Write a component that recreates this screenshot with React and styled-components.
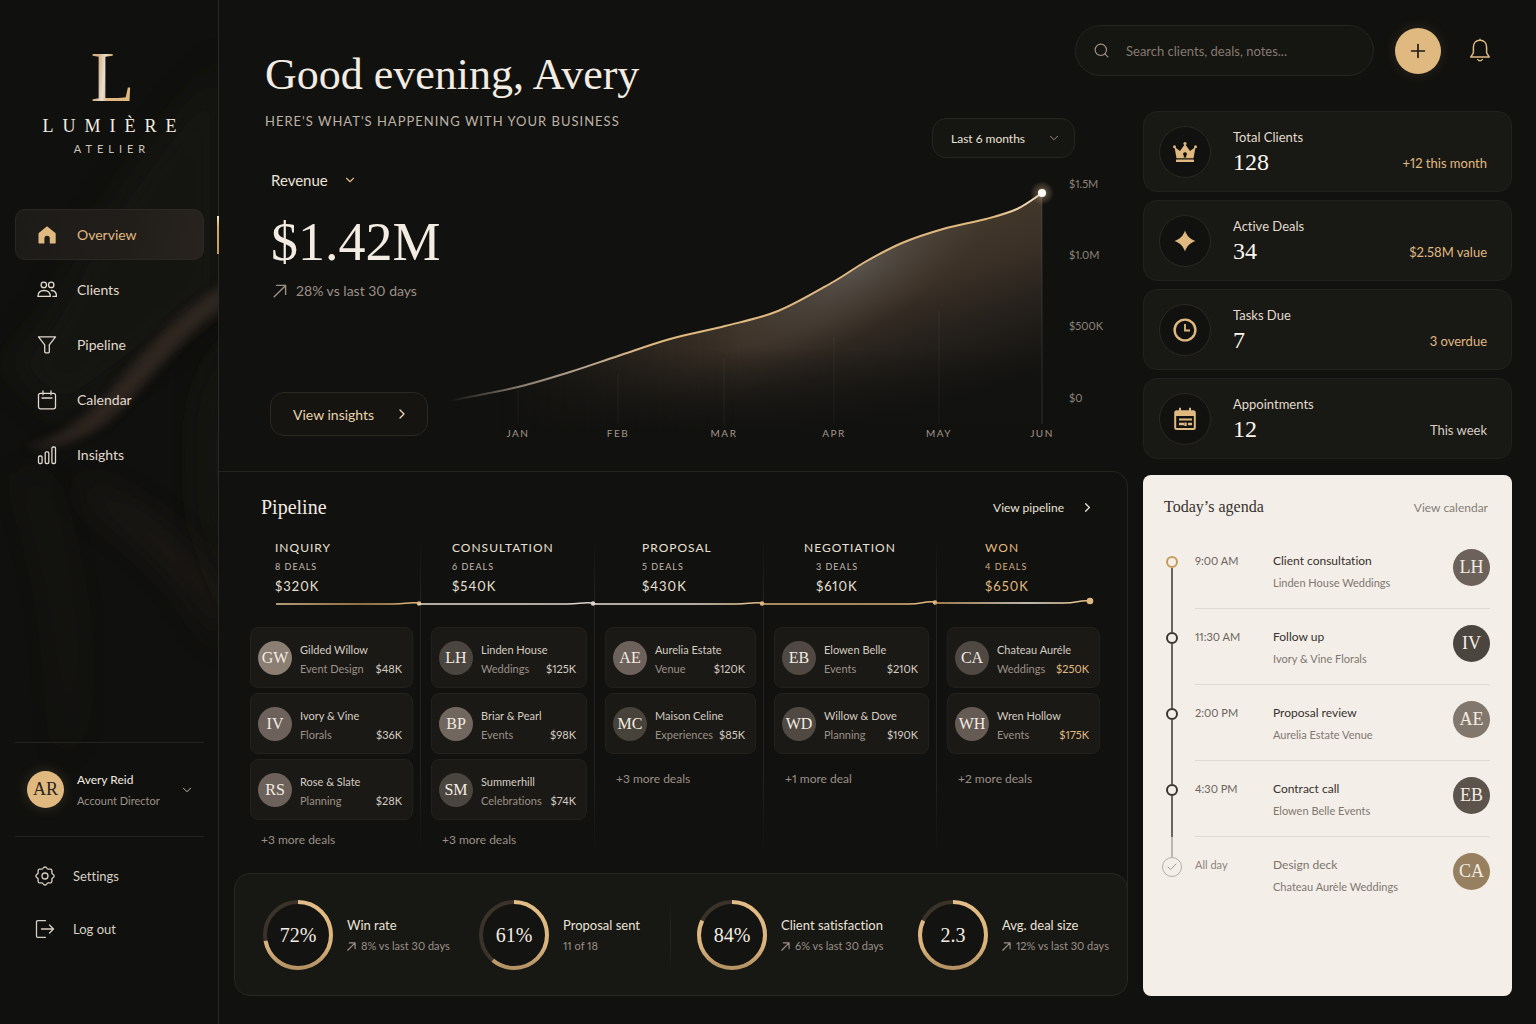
import { useState } from "react";
import styled, { createGlobalStyle } from "styled-components";
import { Search, Plus, ChevronDown, ChevronRight, Check } from "lucide-react";

const sans = `Lato, "Open Sans", sans-serif`;
const serif = `"Liberation Serif", "Times New Roman", serif`;
const gold = "#e0b981";
const cream = "#f3ece2";
const muted = "#9c9087";

const GlobalStyle = createGlobalStyle`
    * { box-sizing: border-box; }
    body {
        margin: 0;
        background: #11110f;
        color: ${cream};
        font-family: ${sans};
        font-size: 13px;
        font-variant-ligatures: none;
        font-variant-numeric: proportional-nums;
    }
    h1, h2, p, ul, ol { margin: 0; padding: 0; font-weight: 400; }
    ul, ol { list-style: none; }
    a { color: inherit; text-decoration: none; }
    button, select, input { font: inherit; color: inherit; }
    svg { display: block; flex-shrink: 0; }
`;

/* ---------- shell ---------- */

const Page = styled.div`
    display: grid;
    grid-template-columns: 219px minmax(0, 1fr);
    min-height: 100vh;
`;

const Sidebar = styled.aside`
    position: relative;
    display: flex;
    flex-direction: column;
    padding: 41px 14px 69px 15px;
    border-right: 1px solid #2b2925;
    background: #10100e;
`;

const Silk = styled.svg`
    position: absolute;
    inset: 0;
    width: 100%;
    height: 100%;
    pointer-events: none;
`;

const Brand = styled.div`
    position: relative;
    display: flex;
    flex-direction: column;
    align-items: center;
    font-family: ${serif};
`;

const Monogram = styled.span`
    padding-left: 6px;
    font-size: 72px;
    line-height: 72px;
    background: linear-gradient(95deg, #d6b284 28%, #e9e0d6 40%, ${gold} 48%, ${gold} 100%);
    background-clip: text;
    color: transparent;
`;

const BrandName = styled.span`
    margin-top: 3px;
    padding-left: 9px;
    font-size: 18px;
    line-height: 20px;
    letter-spacing: 9px;
`;

const BrandSub = styled.span`
    margin-top: 6px;
    padding-left: 5px;
    font-family: ${sans};
    font-size: 11px;
    line-height: 14px;
    letter-spacing: 5px;
    color: #cfc6bb;
`;

const Nav = styled.nav`
    position: relative;
    display: flex;
    flex-direction: column;
    gap: 4px;
    margin-top: 53px;
`;

const NavLink = styled.a`
    position: relative;
    display: flex;
    align-items: center;
    gap: 20px;
    height: 51px;
    padding-left: 21px;
    border: 1px solid ${(p) => (p.$active ? "#2b2722" : "transparent")};
    border-radius: 10px;
    background: ${(p) => (p.$active ? "linear-gradient(100deg, #1d1b18, #211e1a 60%, #28231f)" : "none")};
    color: ${(p) => (p.$active ? gold : "#e2d9ce")};
    font-size: 14px;

    &::after {
        content: "";
        display: ${(p) => (p.$active ? "block" : "none")};
        position: absolute;
        top: 6px;
        right: -16px;
        width: 2px;
        height: 38px;
        background: linear-gradient(#f5e6cf, #d7a65f 30%, #c9965a);
    }
`;

const SideFoot = styled.div`
    position: relative;
    margin-top: auto;
`;

const Profile = styled.button`
    display: flex;
    align-items: center;
    width: 100%;
    height: 95px;
    padding: 0 10px 0 12px;
    border: 0;
    border-top: 1px solid #25231f;
    border-bottom: 1px solid #25231f;
    background: none;
    text-align: left;
`;

const ProfileText = styled.span`
    flex: 1;
    margin-left: 13px;
    font-size: 12px;
    line-height: 21px;

    small {
        display: block;
        font-size: 11px;
        color: ${muted};
    }
`;

const FootLinks = styled.div`
    padding-top: 12px;
`;

const FootLink = styled.a`
    display: flex;
    align-items: center;
    gap: 18px;
    height: 53px;
    padding-left: 20px;
    font-size: 13px;
    color: #d8cfc4;
`;

const Avatar = styled.span`
    display: flex;
    flex-shrink: 0;
    align-items: center;
    justify-content: center;
    width: ${(p) => (p.$small ? 34 : 37)}px;
    height: ${(p) => (p.$small ? 34 : 37)}px;
    border-radius: 50%;
    background: ${(p) => p.$bg};
    box-shadow: ${(p) => (p.$glow ? "0 0 14px #e0b98130" : "none")};
    color: ${(p) => (p.$dark ? "#2a2419" : cream)};
    font-family: ${serif};
    font-size: ${(p) => (p.$small ? 16 : 18)}px;
`;

/* ---------- top bar ---------- */

const Main = styled.main`
    display: flex;
    flex-direction: column;
    padding-bottom: 28px;
`;

const TopBar = styled.header`
    display: flex;
    align-items: flex-start;
    justify-content: space-between;
    min-height: 110px;
    padding: 25px 44px 0 46px;
`;

const Greeting = styled.h1`
    margin-top: 24px;
    font-family: ${serif};
    font-size: 44px;
    line-height: 52px;
`;

const Tools = styled.div`
    display: flex;
    align-items: center;
`;

const SearchBox = styled.label`
    display: flex;
    align-items: center;
    gap: 16px;
    width: 299px;
    height: 51px;
    padding: 0 17px;
    border: 1px solid #262520;
    border-radius: 26px;
    background: #151512;
    color: #a3968a;

    input {
        flex: 1;
        min-width: 0;
        padding: 0;
        border: 0;
        outline: 0;
        background: none;
        font-size: 13px;
    }
    input::placeholder {
        color: #857a70;
        opacity: 1;
    }
`;

const AddButton = styled.button`
    display: flex;
    align-items: center;
    justify-content: center;
    width: 46px;
    height: 46px;
    margin: 0 27px 0 21px;
    padding: 0;
    border: 0;
    border-radius: 50%;
    background: ${gold};
    box-shadow: 0 0 14px #e0b98122;
    color: #1b1712;
`;

const BellButton = styled.button`
    padding: 0;
    border: 0;
    background: none;
    color: ${gold};
`;

const Content = styled.div`
    display: grid;
    flex: 1;
    grid-template-columns: minmax(0, 1fr) 369px;
    gap: 15px;
    padding-right: 24px;
`;

const Left = styled.div`
    display: flex;
    flex-direction: column;
`;

const Right = styled.div`
    display: flex;
    flex-direction: column;
    gap: 8px;
    padding-top: 1px;
`;

/* ---------- revenue ---------- */

const Hero = styled.section`
    padding: 3px 18px 25px 46px;
`;

const HeroTop = styled.div`
    display: flex;
    align-items: flex-start;
    justify-content: space-between;
    padding-right: 35px;
`;

const Lead = styled.p`
    font-size: 13px;
    line-height: 16px;
    letter-spacing: 1px;
    color: #bdb2a6;
`;

const SelectWrap = styled.span`
    position: relative;
    display: inline-block;
    width: ${(p) => p.$width}px;
    margin-top: ${(p) => (p.$boxed ? 5 : 0)}px;

    select {
        width: 100%;
        height: ${(p) => (p.$boxed ? 40 : 20)}px;
        padding: 0 ${(p) => (p.$boxed ? 18 : 0)}px;
        border: ${(p) => (p.$boxed ? "1px solid #262520" : "0")};
        border-radius: ${(p) => (p.$boxed ? 14 : 0)}px;
        background: ${(p) => (p.$boxed ? "#151512" : "none")};
        font-size: ${(p) => (p.$boxed ? 12 : 15)}px;
        color: #ebe2d7;
        appearance: none;
    }
    svg {
        position: absolute;
        top: 50%;
        right: ${(p) => (p.$boxed ? 14 : 0)}px;
        margin-top: -7px;
        pointer-events: none;
    }
`;

const HeroBody = styled.div`
    display: grid;
    grid-template-columns: 170px minmax(0, 1fr);
    padding-left: 5px;
`;

const Summary = styled.div`
    display: flex;
    flex-direction: column;
    align-items: flex-start;
    padding: 12px 0 10px;
`;

const Measure = styled.div`
    padding-left: 1px;
`;

const Total = styled.strong`
    margin-top: 22px;
    padding-left: 1px;
    font-family: ${serif};
    font-size: 54px;
    font-weight: 400;
    line-height: 60px;
`;

const Trend = styled.p`
    display: flex;
    align-items: center;
    gap: ${(p) => (p.$large ? 9 : 5)}px;
    margin-top: ${(p) => (p.$large ? 9 : 0)}px;
    padding-left: ${(p) => (p.$large ? 3 : 0)}px;
    font-size: ${(p) => (p.$large ? 14 : 11)}px;
    line-height: 20px;
    color: ${muted};
    white-space: nowrap;
`;

const InsightsButton = styled.button`
    display: flex;
    align-items: center;
    justify-content: space-between;
    width: 158px;
    height: 44px;
    margin-top: auto;
    padding: 0 17px 0 22px;
    border: 1px solid #2b2822;
    border-radius: 14px;
    background: #151411;
    color: #ead3ad;
    font-size: 14px;
`;

const Chart = styled.svg`
    width: 100%;
    height: auto;
    font-family: ${sans};
    font-size: 11px;
    overflow: visible;
`;

/* ---------- pipeline ---------- */

const Panel = styled.section`
    flex: 1;
    padding: 23px 19px 33px 21px;
    border: 1px solid #25241f;
    border-width: 1px 1px 0 0;
    border-radius: 0 16px 0 0;
`;

const PanelHead = styled.div`
    display: flex;
    align-items: center;
    justify-content: space-between;
    padding: 0 13px 0 21px;
`;

const PanelTitle = styled.h2`
    font-family: ${serif};
    font-size: ${(p) => p.$size}px;
    line-height: 24px;
`;

const PanelLink = styled.a`
    display: flex;
    align-items: center;
    gap: 16px;
    font-size: 12px;
    color: #ebe2d7;
`;

const Stages = styled.div`
    display: grid;
    grid-template-columns: 181fr 174fr 169fr 173fr 171fr;
    margin-top: 16px;
`;

const Stage = styled.div`
    padding: 5px 0 8px;
    background: ${(p) =>
        p.$last ? "none" : "linear-gradient(transparent, #24231f 20%, #24231f 75%, transparent) right / 1px 100% no-repeat"};
    color: ${(p) => (p.$won ? gold : "#e9e0d5")};
`;

const StageName = styled.h2`
    padding-left: ${(p) => p.$inset}px;
    font-size: 12px;
    line-height: 16px;
    letter-spacing: 1px;
`;

const StageFigures = styled.p`
    padding-left: ${(p) => p.$inset}px;
    margin-top: 4px;
    font-size: 13px;
    line-height: 16px;
    letter-spacing: 1px;

    small {
        display: block;
        margin-bottom: 4px;
        font-size: 9px;
        line-height: 14px;
        color: ${(p) => (p.$won ? "#cfae80" : "#c3b9ae")};
    }
`;

const Thread = styled.svg`
    width: 100%;
    height: 12px;
    margin: 4px 0 17px;
    overflow: visible;
`;

const DealList = styled.ul`
    display: flex;
    flex-direction: column;
    gap: 5px;
    padding: 0 8px 0 10px;
`;

const Deal = styled.li`
    display: flex;
    align-items: center;
    gap: 8px;
    height: 61px;
    padding: 0 10px 0 7px;
    border: 1px solid #22211d;
    border-radius: 8px;
    background: #1a1916;
`;

const DealText = styled.div`
    flex: 1;
    min-width: 0;
    padding-top: 2px;
    font-size: 11px;
    line-height: 19px;
    color: #d5ccc1;
    white-space: nowrap;

    p {
        display: flex;
        justify-content: space-between;
        color: ${muted};
    }
    b {
        font-weight: 400;
        color: ${(p) => (p.$won ? gold : "#d5ccc1")};
    }
`;

const More = styled.a`
    display: block;
    margin-top: ${(p) => (p.$full ? 12 : 17)}px;
    padding-left: 21px;
    font-size: 12px;
    line-height: 16px;
    color: ${muted};
`;

/* ---------- metrics ---------- */

const Metrics = styled.section`
    display: grid;
    grid-template-columns: 216fr 218fr 221fr 209fr;
    align-items: center;
    height: 123px;
    margin: -16px 0 0 15px;
    padding-left: 28px;
    border: 1px solid #282620;
    border-radius: 16px;
    background: #171714;
`;

const Metric = styled.div`
    display: flex;
    align-items: center;
    gap: 14px;
    background: ${(p) =>
        p.$divider ? "linear-gradient(transparent, #2a2823, transparent) right 26px top / 1px 100% no-repeat" : "none"};
`;

const Gauge = styled.svg`
    font-family: ${serif};
    font-size: 20px;
`;

const MetricText = styled.div`
    padding-top: 1px;
    font-size: 13px;
    line-height: 22px;
    color: #ebe2d7;
    white-space: nowrap;
`;

/* ---------- stat cards ---------- */

const StatCard = styled.article`
    display: flex;
    align-items: center;
    height: 81px;
    padding: 0 24px 0 15px;
    border: 1px solid #22211d;
    border-radius: 14px;
    background: #181815;
`;

const StatIcon = styled.span`
    display: flex;
    align-items: center;
    justify-content: center;
    width: 52px;
    height: 52px;
    margin-right: 22px;
    border: 1px solid #2c2822;
    border-radius: 50%;
    background: #11110f;
    color: ${gold};
`;

const StatText = styled.p`
    flex: 1;
    padding-top: 1px;
    font-size: 13px;
    line-height: 18px;
    color: #e3dace;

    strong {
        display: block;
        margin-top: 2px;
        font-family: ${serif};
        font-size: 24px;
        font-weight: 400;
        line-height: 28px;
        color: #fbf6ee;
    }
`;

const StatNote = styled.span`
    align-self: flex-end;
    padding-bottom: 18px;
    font-size: 13px;
    line-height: 20px;
    color: ${(p) => (p.$plain ? "#d8cfc4" : gold)};
`;

/* ---------- agenda ---------- */

const Agenda = styled.section`
    flex: 1;
    margin-top: 8px;
    padding: 20px 22px 24px 18px;
    border-radius: 8px;
    background: #f3eee8;
    color: #37322d;
`;

const AgendaHead = styled.div`
    display: flex;
    align-items: center;
    justify-content: space-between;
    margin-bottom: 14px;
    padding: 0 2px 0 3px;

    a {
        font-size: 12px;
        color: #857e77;
    }
`;

const Slot = styled.li`
    display: grid;
    grid-template-columns: 21px minmax(0, 1fr);
    gap: 13px;
    height: 76px;
`;

const Rail = styled.span`
    display: flex;
    flex-direction: column;
    align-items: center;

    &::before, &::after {
        content: "";
        width: 2px;
        height: ${(p) => (p.$done ? 20 : 23)}px;
        background: ${(p) => (p.$first ? "none" : p.$done ? "#bdb6ae" : "#6b655e")};
    }
    &::after {
        flex: 1;
        background: ${(p) => (p.$done ? "none" : "#6b655e")};
    }
`;

const Dot = styled.i`
    display: flex;
    align-items: center;
    justify-content: center;
    width: ${(p) => (p.$done ? 20 : 12)}px;
    height: ${(p) => (p.$done ? 20 : 12)}px;
    border: ${(p) => (p.$done ? "1px solid #b5aea6" : `2px solid ${p.$first ? "#c59a5c" : "#3a3530"}`)};
    border-radius: 50%;
    color: #a09990;
`;

const SlotBody = styled.div`
    display: flex;
    border-bottom: 1px solid ${(p) => (p.$done ? "transparent" : "#dfd9d2")};

    time {
        width: 78px;
        padding-top: 19px;
        font-size: 11px;
        line-height: 18px;
        color: ${(p) => (p.$done ? "#8b847d" : "#6b645d")};
    }
    > span {
        margin-top: 16px;
    }
`;

const SlotText = styled.p`
    flex: 1;
    padding-top: 19px;
    font-size: 12px;
    line-height: 18px;
    color: ${(p) => (p.$done ? "#7b746d" : "#37322d")};

    small {
        display: block;
        margin-top: 4px;
        font-size: 11px;
        color: #7f7871;
    }
`;

/* ---------- icons ---------- */

const Line = ({ size = 20, children }) => (
    <svg width={size} height={size} viewBox="0 0 20 20" fill="none" stroke="currentColor" strokeWidth="1.3" strokeLinecap="round" strokeLinejoin="round">
        {children}
    </svg>
);

const HomeIcon = () => (
    <svg width="20" height="20" viewBox="0 0 20 20" fill="currentColor">
        <path d="M10 1.2 18.4 8a1 1 0 0 1 .3.7v9.1a.6.6 0 0 1-.6.6h-5.3v-5a2.7 2.7 0 0 0-5.4 0v5H2.1a.6.6 0 0 1-.6-.6V8.700a1 1 0 0 1 .3-.7z" />
    </svg>
);

const ClientsIcon = () => (
    <Line>
        <circle cx="6.800" cy="4.900" r="2.700" />
        <circle cx="14.200" cy="4.900" r="2.700" />
        <path d="M.9 16.400c0-3.700 2.300-5.900 6.200-5.900s6.200 2.200 6.200 5.900z" />
        <path d="M14.300 10.500c3.400-.2 5.200 2.200 5.200 5.900h-3.600" />
    </Line>
);

const FunnelIcon = () => (
    <Line>
        <path d="M1.500 1.800h17l-6.200 8v7a1 1 0 0 1-1 1H8.700a1 1 0 0 1-1-1v-7z" />
    </Line>
);

const CalendarIcon = () => (
    <Line>
        <rect x="1.500" y="3.300" width="17" height="15.500" rx="2" />
        <path d="M6 .8v4M14 .8v4M5 8h10" />
    </Line>
);

const BarsIcon = () => (
    <Line>
        <rect x="1.500" y="11" width="3.600" height="7.500" rx="1.200" />
        <rect x="8.200" y="6.800" width="3.600" height="11.700" rx="1.200" />
        <rect x="14.900" y="2" width="3.600" height="16.500" rx="1.200" />
    </Line>
);

const RiseIcon = ({ size }) => (
    <svg width={size} height={size} viewBox="0 0 14 14" fill="none" stroke="currentColor" strokeWidth={size > 10 ? 1.4 : 1.8} strokeLinecap="round" strokeLinejoin="round">
        <path d="M1.200 12.800 12.600 1.400M3.600 1.400h9v9" />
    </svg>
);

// eight soft lobes round the hub
const gearPath =
    Array.from({ length: 96 }, (_, i) => {
        const a = (i / 96) * Math.PI * 2;
        const r = 8.3 + 0.8 * Math.cos(8 * a);
        return `${i ? "L" : "M"}${(10 + r * Math.cos(a)).toFixed(2)} ${(10 + r * Math.sin(a)).toFixed(2)}`;
    }).join("") + "Z";

const GearIcon = () => (
    <Line>
        <path d={gearPath} />
        <circle cx="10" cy="10" r="3" />
    </Line>
);

const LogoutIcon = () => (
    <Line>
        <path d="M10.500 1.700H2.700a1.200 1.200 0 0 0-1.200 1.200v14.200a1.200 1.200 0 0 0 1.200 1.200h7.800M6.500 10h12M14.500 6l4 4-4 4" />
    </Line>
);

const BellIcon = () => (
    <svg width="24" height="26" viewBox="0 0 24 26" fill="none" stroke="currentColor" strokeWidth="1.500" strokeLinecap="round" strokeLinejoin="round">
        <path d="M12 1.300v1M12 2.300c-4.200 0-6.600 3-6.600 7v5.500l-2.700 4.300h18.600l-2.700-4.300V9.300c0-4-2.400-7-6.600-7z" />
        <path d="M9.800 21.500c.5.900 1.300 1.300 2.200 1.300s1.700-.4 2.200-1.300" />
    </svg>
);

const CrownIcon = () => (
    <svg width="24" height="22" viewBox="0 0 24 22" fill="currentColor">
        <circle cx="1.500" cy="5.800" r="1.500" />
        <circle cx="12" cy="2.500" r="1.600" />
        <circle cx="22.500" cy="5.800" r="1.500" />
        <path fillRule="evenodd" d="M1.500 6 7 10l5-7 5 7 5.500-4-2 11.200h-17zM12 11.200a1.900 1.900 0 0 0-1.200 3.400v2h2.400v-2a1.900 1.900 0 0 0-1.200-3.400z" />
        <rect x="3" y="18.600" width="18" height="2.300" rx=".5" />
    </svg>
);

const SparkIcon = () => (
    <svg width="22" height="22" viewBox="0 0 22 22" fill="currentColor">
        <path d="M11 .5c1.800 5.300 5 8.700 10.500 10.500C16 12.800 12.800 16.200 11 21.500 9.200 16.200 6 12.800.5 11 6 9.200 9.200 5.800 11 .5z" />
    </svg>
);

const ClockIcon = () => (
    <svg width="24" height="24" viewBox="0 0 24 24" fill="none" stroke="currentColor" strokeWidth="2.400">
        <circle cx="12" cy="12" r="10.400" />
        <path d="M12 6v6.500h5" strokeWidth="1.800" />
    </svg>
);

const DatesIcon = () => (
    <svg width="24" height="24" viewBox="0 0 24 24" fill="none" stroke="currentColor">
        <rect x="2.200" y="4.200" width="19.600" height="17.800" rx="1.500" strokeWidth="2" />
        <path d="M7 .8v4M17 .8v4" strokeWidth="2" />
        <path d="M2 6.500h20" strokeWidth="5" />
        <path d="M6 12.500h13" strokeWidth="2" />
        <path d="M6 17h5M12.500 15.500v3.500M15 17h4" strokeWidth="2.400" />
    </svg>
);

/* ---------- data ---------- */

const navItems = [
    { label: "Overview", icon: <HomeIcon /> },
    { label: "Clients", icon: <ClientsIcon /> },
    { label: "Pipeline", icon: <FunnelIcon /> },
    { label: "Calendar", icon: <CalendarIcon /> },
    { label: "Insights", icon: <BarsIcon /> },
];

const stats = [
    { label: "Total Clients", value: "128", note: "+12 this month", icon: <CrownIcon /> },
    { label: "Active Deals", value: "34", note: "$2.58M value", icon: <SparkIcon /> },
    { label: "Tasks Due", value: "7", note: "3 overdue", icon: <ClockIcon /> },
    { label: "Appointments", value: "12", note: "This week", icon: <DatesIcon />, plain: true },
];

const stages = [
    {
        name: "INQUIRY", count: "8 DEALS", total: "$320K", more: "+3 more deals", width: 181, start: 36, inset: 35,
        colors: ["#e8c796", "#b98d55", gold],
        deals: [
            ["GW", "Gilded Willow", "Event Design", "$48K", "#8b7e72"],
            ["IV", "Ivory & Vine", "Florals", "$36K", "#6c625b"],
            ["RS", "Rose & Slate", "Planning", "$28K", "#6c625b"],
        ],
    },
    {
        name: "CONSULTATION", count: "6 DEALS", total: "$540K", more: "+3 more deals", width: 174, inset: 31,
        colors: ["#e9dfd2", "#e9dfd2", "#d8d2ca"],
        deals: [
            ["LH", "Linden House", "Weddings", "$125K", "#4b4540"],
            ["BP", "Briar & Pearl", "Events", "$98K", "#71675f"],
            ["SM", "Summerhill", "Celebrations", "$74K", "#4b4540"],
        ],
    },
    {
        name: "PROPOSAL", count: "5 DEALS", total: "$430K", more: "+3 more deals", width: 169, inset: 47,
        colors: ["#e9dfd2", "#e9dfd2", gold],
        deals: [
            ["AE", "Aurelia Estate", "Venue", "$120K", "#6c625b"],
            ["MC", "Maison Celine", "Experiences", "$85K", "#47423a"],
        ],
    },
    {
        name: "NEGOTIATION", count: "3 DEALS", total: "$610K", more: "+1 more deal", width: 173, inset: 40, figures: 52,
        colors: ["#dcb27a", "#d9ae75", gold],
        deals: [
            ["EB", "Elowen Belle", "Events", "$210K", "#4f4843"],
            ["WD", "Willow & Dove", "Planning", "$190K", "#4f4843"],
        ],
    },
    {
        name: "WON", count: "4 DEALS", total: "$650K", more: "+2 more deals", width: 171, inset: 48, won: true,
        colors: ["#c99b5e", "#f3ece2", gold],
        deals: [
            ["CA", "Chateau Auréle", "Weddings", "$250K", "#4f4843"],
            ["WH", "Wren Hollow", "Events", "$175K", "#655b54"],
        ],
    },
];

const metrics = [
    { value: "72%", share: 0.72, label: "Win rate", note: "8% vs last 30 days", up: true },
    { value: "61%", share: 0.61, label: "Proposal sent", note: "11 of 18" },
    { value: "84%", share: 0.82, label: "Client satisfaction", note: "6% vs last 30 days", up: true },
    { value: "2.3", share: 0.82, label: "Avg. deal size", note: "12% vs last 30 days", up: true },
];

const slots = [
    { time: "9:00 AM", title: "Client consultation", who: "Linden House Weddings", initials: "LH", bg: "#6c625b" },
    { time: "11:30 AM", title: "Follow up", who: "Ivory & Vine Florals", initials: "IV", bg: "#4b4540" },
    { time: "2:00 PM", title: "Proposal review", who: "Aurelia Estate Venue", initials: "AE", bg: "#82776c" },
    { time: "4:30 PM", title: "Contract call", who: "Elowen Belle Events", initials: "EB", bg: "#5c534d" },
    { time: "All day", title: "Design deck", who: "Chateau Aurèle Weddings", initials: "CA", bg: "#96805f", done: true },
];

const months = [["JAN", 78, 229], ["FEB", 178, 198], ["MAR", 284, 168], ["APR", 394, 124], ["MAY", 499, 71], ["JUN", 602, 35]];
const ticks = [["$1.5M", 26], ["$1.0M", 97], ["$500K", 168], ["$0", 240]];
const curve = [
    [9, 243], [78, 229], [130, 214], [178, 198], [230, 181], [285, 168], [338, 153],
    [393, 124], [425, 104], [462, 85], [503, 71], [546, 61], [577, 51], [602, 35],
];

// Catmull-Rom through the points, written as cubic segments
const smooth = (pts) =>
    pts.slice(1).reduce((d, p, i) => {
        const a = pts[i];
        const before = pts[i - 1] || a;
        const after = pts[i + 2] || p;
        const c1 = [a[0] + (p[0] - before[0]) / 6, a[1] + (p[1] - before[1]) / 6];
        const c2 = [p[0] - (after[0] - a[0]) / 6, p[1] - (after[1] - a[1]) / 6];
        return `${d}C${c1.join(" ")} ${c2.join(" ")} ${p.join(" ")}`;
    }, `M${pts[0].join(" ")}`);

const curvePath = smooth(curve);
const areaPath = `${curvePath}V274H9Z`;

/* ---------- parts ---------- */

const SilkBackdrop = () => (
    <Silk viewBox="0 0 218 1024" preserveAspectRatio="none" aria-hidden="true">
        <defs>
            <filter id="soft" x="-50%" y="-50%" width="200%" height="200%">
                <feGaussianBlur stdDeviation="16" />
            </filter>
            <filter id="fine" x="-50%" y="-50%" width="200%" height="200%">
                <feGaussianBlur stdDeviation="5" />
            </filter>
        </defs>
        <path d="M225 60C170 120 110 190 60 290 40 330 20 350 0 360L60 420C120 380 180 330 225 300Z" fill="#1c1c18" opacity=".4" filter="url(#soft)" />
        <path d="M240 330C200 370 190 420 200 520L240 640Z" fill="#1c1c18" opacity=".5" filter="url(#soft)" />
        <path d="M225 283C170 318 140 358 105 396 85 418 60 438 25 448 75 450 110 424 130 400 160 366 190 330 225 307Z" fill="#3a2f28" opacity=".7" filter="url(#fine)" />
        <path d="M80 490C120 530 180 560 225 650V600C190 540 130 500 80 480Z" fill="#332a24" opacity=".4" filter="url(#soft)" />
        <path d="M20 470C50 560 68 650 62 760 90 700 70 560 40 480Z" fill="#2a251f" opacity=".3" filter="url(#soft)" />
    </Silk>
);

const RevenueChart = () => (
    <Chart viewBox="0 0 670 288" role="img" aria-label="Revenue over the last six months">
        <defs>
            <linearGradient id="fill" gradientUnits="userSpaceOnUse" x1="76" y1="216" x2="132" y2="376">
                <stop offset="0" stopColor="#43382b" />
                <stop offset=".3" stopColor="#3a3026" />
                <stop offset=".6" stopColor="#26211c" />
                <stop offset="1" stopColor="#131310" />
            </linearGradient>
            <linearGradient id="fadeIn" gradientUnits="userSpaceOnUse" x1="60" y1="0" x2="300" y2="0">
                <stop offset="0" stopColor="#000" />
                <stop offset=".5" stopColor="#777" />
                <stop offset="1" stopColor="#fff" />
            </linearGradient>
            <linearGradient id="fadeDown" gradientUnits="userSpaceOnUse" x1="0" y1="190" x2="0" y2="274">
                <stop offset="0" stopColor="#11110f" stopOpacity="0" />
                <stop offset="1" stopColor="#11110f" />
            </linearGradient>
            <mask id="areaMask">
                <rect width="670" height="288" fill="url(#fadeIn)" />
            </mask>
            <clipPath id="areaClip">
                <path d={areaPath} />
            </clipPath>
            <radialGradient id="sheen">
                <stop offset="0" stopColor="#5b5650" stopOpacity=".9" />
                <stop offset=".4" stopColor="#544e47" stopOpacity=".55" />
                <stop offset="1" stopColor="#4a4138" stopOpacity="0" />
            </radialGradient>
            <linearGradient id="stroke" gradientUnits="userSpaceOnUse" x1="9" y1="0" x2="602" y2="0">
                <stop offset="0" stopColor="#8a7d70" stopOpacity="0" />
                <stop offset=".12" stopColor="#8a7d70" />
                <stop offset=".22" stopColor="#b5a390" />
                <stop offset=".34" stopColor={gold} />
                <stop offset=".92" stopColor={gold} />
                <stop offset="1" stopColor="#f7e8d0" />
            </linearGradient>
            <radialGradient id="halo">
                <stop offset="0" stopColor="#fff" stopOpacity=".6" />
                <stop offset=".45" stopColor="#c6a47a" stopOpacity=".3" />
                <stop offset="1" stopColor="#c6a47a" stopOpacity="0" />
            </radialGradient>
        </defs>
        <g mask="url(#areaMask)">
            <path d={areaPath} fill="url(#fill)" />
            <g clipPath="url(#areaClip)">
                <ellipse cx="418" cy="108" rx="165" ry="62" fill="url(#sheen)" transform="rotate(-32 418 108)" />
            </g>
            <path d={areaPath} fill="url(#fadeDown)" />
        </g>
        {months.map(([name, x, y]) => (
            <g key={name}>
                <line x1={x} x2={x} y1={name === "JUN" ? y : (y + 274) / 2 - 20} y2="266" stroke="#fff" strokeOpacity={name === "JUN" ? 0.12 : 0.05} />
                <text x={x} y="279" textAnchor="middle" fontSize="10" letterSpacing="1.500" fill="#a3968a">{name}</text>
            </g>
        ))}
        {ticks.map(([name, y]) => (
            <text key={name} x="629" y={y + 4} fill="#8f847a">{name}</text>
        ))}
        <path d={curvePath} fill="none" stroke="url(#stroke)" strokeWidth="2" strokeLinecap="round" />
        <circle cx="602" cy="35" r="12" fill="url(#halo)" />
        <circle cx="602" cy="35" r="4" fill="#fffdf9" />
    </Chart>
);

const StageThread = ({ stage, index }) => {
    const { width: w, start = 0, colors, won } = stage;
    const base = won ? 5 : 6;
    const end = won ? 153 : w - 2;
    const node = won ? 3 : index === 3 ? 4 : 5;
    const from = start || (index ? -2 : 0);
    const id = `thread${index}`;
    return (
        <Thread viewBox={`0 0 ${w} 12`} preserveAspectRatio="none" aria-hidden="true">
            <defs>
                <linearGradient id={id} gradientUnits="userSpaceOnUse" x1={from} x2={end} y1="0" y2="0">
                    <stop offset="0" stopColor={colors[0]} />
                    <stop offset=".6" stopColor={colors[1]} />
                    <stop offset="1" stopColor={colors[2]} />
                </linearGradient>
            </defs>
            <path d={`M${from} ${base}H${end - 26}C${end - 12} ${base} ${end - 12} ${node - 1} ${end} ${node}`} fill="none" stroke={`url(#${id})`} strokeWidth="1.500" />
            <circle cx={end} cy={node + (won ? 0 : 0.5)} r={won ? 3.3 : 2.2} fill={colors[2]} />
        </Thread>
    );
};

const Ring = ({ value, share }) => {
    const r = 33;
    const length = 2 * Math.PI * r;
    return (
        <Gauge width="70" height="72" viewBox="-35 -36 70 72">
            <defs>
                <linearGradient id="ring" gradientUnits="userSpaceOnUse" x1="0" y1="-33" x2="0" y2="33" gradientTransform="rotate(90)">
                    <stop offset="0" stopColor="#e3bd87" />
                    <stop offset=".65" stopColor="#dbb47c" />
                    <stop offset="1" stopColor="#b39264" />
                </linearGradient>
            </defs>
            <circle r={r} fill="#131311" stroke="#3b3329" strokeWidth="4" />
            <circle r={r} fill="none" stroke="url(#ring)" strokeWidth="4" strokeDasharray={`${length * share} ${length}`} transform="rotate(-90)" />
            <text y="7" textAnchor="middle" fill={cream}>{value}</text>
        </Gauge>
    );
};

const App = () => {
    const [query, setQuery] = useState("");
    const [active, setActive] = useState("Overview");

    return (
        <Page>
            <GlobalStyle />
            <Sidebar>
                <SilkBackdrop />
                <Brand>
                    <Monogram>L</Monogram>
                    <BrandName>LUMIÈRE</BrandName>
                    <BrandSub>ATELIER</BrandSub>
                </Brand>
                <Nav>
                    {navItems.map((item) => (
                        <NavLink key={item.label} href="#" $active={item.label === active} onClick={() => setActive(item.label)}>
                            {item.icon}
                            {item.label}
                        </NavLink>
                    ))}
                </Nav>
                <SideFoot>
                    <Profile type="button">
                        <Avatar $bg={gold} $dark $glow>AR</Avatar>
                        <ProfileText>
                            Avery Reid
                            <small>Account Director</small>
                        </ProfileText>
                        <ChevronDown size={14} strokeWidth={1.6} color="#cfc6bb" />
                    </Profile>
                    <FootLinks>
                        <FootLink href="#"><GearIcon />Settings</FootLink>
                        <FootLink href="#"><LogoutIcon />Log out</FootLink>
                    </FootLinks>
                </SideFoot>
            </Sidebar>

            <Main>
                <TopBar>
                    <Greeting>Good evening, Avery</Greeting>
                    <Tools>
                        <SearchBox>
                            <Search size={17} strokeWidth={1.6} />
                            <input
                                type="search"
                                aria-label="Search"
                                placeholder="Search clients, deals, notes..."
                                value={query}
                                onChange={(e) => setQuery(e.target.value)}
                            />
                        </SearchBox>
                        <AddButton type="button" aria-label="Add"><Plus size={22} strokeWidth={1.8} /></AddButton>
                        <BellButton type="button" aria-label="Notifications"><BellIcon /></BellButton>
                    </Tools>
                </TopBar>

                <Content>
                    <Left>
                        <Hero>
                            <HeroTop>
                                <Lead>HERE'S WHAT'S HAPPENING WITH YOUR BUSINESS</Lead>
                                <SelectWrap $width={143} $boxed>
                                    <select aria-label="Period" defaultValue="6">
                                        <option value="6">Last 6 months</option>
                                    </select>
                                    <ChevronDown size={14} strokeWidth={1.6} color="#a3968a" />
                                </SelectWrap>
                            </HeroTop>
                            <HeroBody>
                                <Summary>
                                    <Measure>
                                        <SelectWrap $width={86}>
                                            <select aria-label="Measure" defaultValue="revenue">
                                                <option value="revenue">Revenue</option>
                                            </select>
                                            <ChevronDown size={14} strokeWidth={2} color={gold} />
                                        </SelectWrap>
                                    </Measure>
                                    <Total>$1.42M</Total>
                                    <Trend $large><RiseIcon size={14} />28% vs last 30 days</Trend>
                                    <InsightsButton type="button">
                                        View insights
                                        <ChevronRight size={16} strokeWidth={2} />
                                    </InsightsButton>
                                </Summary>
                                <RevenueChart />
                            </HeroBody>
                        </Hero>

                        <Panel>
                            <PanelHead>
                                <PanelTitle $size={20}>Pipeline</PanelTitle>
                                <PanelLink href="#">View pipeline<ChevronRight size={15} strokeWidth={2} /></PanelLink>
                            </PanelHead>
                            <Stages>
                                {stages.map((stage, i) => (
                                    <Stage key={stage.name} $won={stage.won} $last={i === stages.length - 1}>
                                        <StageName $inset={stage.inset}>{stage.name}</StageName>
                                        <StageFigures $inset={stage.figures || stage.inset} $won={stage.won}>
                                            <small>{stage.count}</small>
                                            {stage.total}
                                        </StageFigures>
                                        <StageThread stage={stage} index={i} />
                                        <DealList>
                                            {stage.deals.map(([initials, name, kind, amount, bg]) => (
                                                <Deal key={initials}>
                                                    <Avatar $small $bg={bg}>{initials}</Avatar>
                                                    <DealText $won={stage.won}>
                                                        {name}
                                                        <p>{kind}<b>{amount}</b></p>
                                                    </DealText>
                                                </Deal>
                                            ))}
                                        </DealList>
                                        <More href="#" $full={stage.deals.length > 2}>{stage.more}</More>
                                    </Stage>
                                ))}
                            </Stages>
                        </Panel>

                        <Metrics>
                            {metrics.map((m, i) => (
                                <Metric key={m.label} $divider={i === 1}>
                                    <Ring value={m.value} share={m.share} />
                                    <MetricText>
                                        {m.label}
                                        <Trend>{m.up && <RiseIcon size={9} />}{m.note}</Trend>
                                    </MetricText>
                                </Metric>
                            ))}
                        </Metrics>
                    </Left>

                    <Right>
                        {stats.map((s) => (
                            <StatCard key={s.label}>
                                <StatIcon>{s.icon}</StatIcon>
                                <StatText>{s.label}<strong>{s.value}</strong></StatText>
                                <StatNote $plain={s.plain}>{s.note}</StatNote>
                            </StatCard>
                        ))}
                        <Agenda>
                            <AgendaHead>
                                <PanelTitle $size={16}>Today’s agenda</PanelTitle>
                                <a href="#">View calendar</a>
                            </AgendaHead>
                            <ol>
                                {slots.map((s, i) => (
                                    <Slot key={s.time}>
                                        <Rail $first={i === 0} $done={s.done}>
                                            <Dot $first={i === 0} $done={s.done}>{s.done && <Check size={12} strokeWidth={2} />}</Dot>
                                        </Rail>
                                        <SlotBody $done={s.done}>
                                            <time>{s.time}</time>
                                            <SlotText $done={s.done}>{s.title}<small>{s.who}</small></SlotText>
                                            <Avatar $bg={s.bg}>{s.initials}</Avatar>
                                        </SlotBody>
                                    </Slot>
                                ))}
                            </ol>
                        </Agenda>
                    </Right>
                </Content>
            </Main>
        </Page>
    );
};

export default App;
